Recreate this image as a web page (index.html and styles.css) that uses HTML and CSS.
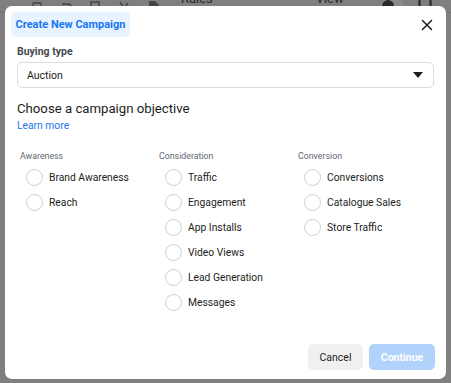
FILE: index.html
```html
<!DOCTYPE html>
<html lang="en">
<head>
  <meta charset="UTF-8">
  <title>Create New Campaign</title>
  <link rel="stylesheet" href="styles.css">
</head>
<body>
  <div class="backdrop">
    <div class="toolbar">
      <span class="tool"><svg width="12" height="12" viewBox="0 0 12 12"><rect x="2" y="3" width="8" height="8" rx="1" fill="none" stroke="#444" stroke-width="1.4"/></svg></span>
      <span class="tool"><svg width="14" height="12" viewBox="0 0 14 12"><path d="M3 4 H9 A3 3 0 0 1 9 10 H6" fill="none" stroke="#444" stroke-width="1.4"/></svg></span>
      <span class="tool"><svg width="12" height="12" viewBox="0 0 12 12"><rect x="2" y="2" width="8" height="9" fill="none" stroke="#444" stroke-width="1.4"/></svg></span>
      <span class="tool"><svg width="14" height="12" viewBox="0 0 14 12"><path d="M2 2 L6 8 L10 3" fill="none" stroke="#444" stroke-width="1.4"/></svg></span>
      <span class="tool"><svg width="14" height="12" viewBox="0 0 14 12"><path d="M2 1 H8 L12 5 V11 H2 Z" fill="#444"/></svg></span>
      <span class="rules">Rules &#9660;</span>
      <span class="view">View Setup</span>
      <span class="toggle"><span class="knob"></span></span>
      <span class="cols">&#10073;&#10073; Co</span>
    </div>
  </div>

  <div class="modal" role="dialog" aria-labelledby="modal-title">
    <div class="modal-head">
      <h1 id="modal-title" class="tab">Create New Campaign</h1>
      <button class="close" aria-label="Close">
        <svg width="12" height="12" viewBox="0 0 12 12"><path d="M1.5 1.5 L10.5 10.5 M10.5 1.5 L1.5 10.5" stroke="#1c1e21" stroke-width="1.5" stroke-linecap="round"/></svg>
      </button>
    </div>

    <div class="modal-body">
      <label class="field-label" for="buying">Buying type</label>
      <div class="select" id="buying">
        <span>Auction</span>
        <svg width="10" height="6" viewBox="0 0 10 6"><path d="M0 0 H10 L5 6 Z" fill="#1c1e21"/></svg>
      </div>

      <h2 class="objective">Choose a campaign objective</h2>
      <a href="#" class="learn">Learn more</a>

      <div class="groups">
        <div class="group">
          <div class="group-title">Awareness</div>
          <div class="option"><span class="radio"></span>Brand Awareness</div>
          <div class="option"><span class="radio"></span>Reach</div>
        </div>
        <div class="group">
          <div class="group-title">Consideration</div>
          <div class="option"><span class="radio"></span>Traffic</div>
          <div class="option"><span class="radio"></span>Engagement</div>
          <div class="option"><span class="radio"></span>App Installs</div>
          <div class="option"><span class="radio"></span>Video Views</div>
          <div class="option"><span class="radio"></span>Lead Generation</div>
          <div class="option"><span class="radio"></span>Messages</div>
        </div>
        <div class="group">
          <div class="group-title">Conversion</div>
          <div class="option"><span class="radio"></span>Conversions</div>
          <div class="option"><span class="radio"></span>Catalogue Sales</div>
          <div class="option"><span class="radio"></span>Store Traffic</div>
        </div>
      </div>
    </div>

    <div class="modal-foot">
      <button class="btn btn-cancel">Cancel</button>
      <button class="btn btn-continue" disabled>Continue</button>
    </div>
  </div>
</body>
</html>
```

FILE: styles.css
```css
body {
  margin: 0;
  width: 451px;
  height: 383px;
  overflow: hidden;
  background: #7f7f7f;
  font-family: Roboto, "Liberation Sans", Arial, sans-serif;
  color: #1c1e21;
  position: relative;
}

.backdrop {
  height: 383px;
}

.toolbar {
  display: flex;
  align-items: center;
  height: 18px;
  margin-top: -6px;
  padding-left: 22px;
  font-size: 13px;
  color: #2a2a2a;
  border-bottom: 1px solid #6f6f6f;
}

.tool {
  display: flex;
  width: 33px;
  justify-content: center;
  margin-top: 6px;
}

.rules {
  margin-left: 12px;
  margin-top: 6px;
}

.view {
  margin-left: 92px;
  margin-top: 6px;
}

.toggle {
  width: 26px;
  height: 14px;
  margin-left: 8px;
  margin-top: 6px;
  border-radius: 7px;
  background: #8a8a8a;
}

.knob {
  display: block;
  width: 12px;
  height: 12px;
  margin: 1px;
  border-radius: 50%;
  background: #2a2a2a;
}

.cols {
  margin-left: 10px;
  margin-top: 6px;
}

.modal {
  position: absolute;
  left: 5px;
  top: 6px;
  width: 441px;
  height: 373px;
  background: #fff;
  border-radius: 7px;
  display: flex;
  flex-direction: column;
}

.modal-head {
  display: flex;
  justify-content: space-between;
  align-items: center;
  padding: 6px 6px 0 6px;
}

.tab {
  margin: 0;
  height: 25px;
  width: 119px;
  box-sizing: border-box;
  display: flex;
  align-items: center;
  justify-content: center;
  white-space: nowrap;
  background: #e7f3ff;
  border-radius: 5px;
  color: #1877f2;
  font-size: 11px;
  font-weight: bold;
}

.close {
  border: none;
  background: none;
  padding: 0;
  width: 24px;
  height: 24px;
  display: flex;
  align-items: center;
  justify-content: center;
  margin-right: 1px;
}

.modal-body {
  padding: 0 12px;
  flex: 1;
}

.field-label {
  display: block;
  margin-top: 8px;
  font-size: 10.5px;
  font-weight: bold;
  color: #444950;
}

.select {
  margin-top: 4px;
  height: 26px;
  box-sizing: border-box;
  border: 1px solid #dadde1;
  border-radius: 5px;
  display: flex;
  align-items: center;
  justify-content: space-between;
  padding: 0 10px 0 9px;
  font-size: 10.5px;
}

.objective {
  margin: 12px 0 0 0;
  font-size: 13.2px;
  font-weight: normal;
  line-height: 17px;
}

.learn {
  display: block;
  margin-top: 2px;
  font-size: 10.3px;
  color: #1877f2;
  text-decoration: none;
}

.groups {
  display: grid;
  grid-template-columns: 139px 139px 1fr;
  margin-top: 19px;
  padding-left: 3px;
}

.group-title {
  font-size: 8.8px;
  color: #606770;
  line-height: 10px;
  margin-bottom: 4px;
}

.option {
  display: flex;
  align-items: center;
  gap: 6px;
  height: 25px;
  font-size: 10.3px;
  padding-left: 6px;
}

.radio {
  width: 17px;
  height: 17px;
  border: 1px solid #ccd0d5;
  border-radius: 50%;
  box-sizing: border-box;
}

.modal-foot {
  display: flex;
  justify-content: flex-end;
  gap: 6px;
  padding: 0 11px 9px 0;
}

.btn {
  height: 26px;
  border: none;
  border-radius: 5px;
  font-family: Roboto, "Liberation Sans", Arial, sans-serif;
  font-size: 10.5px;
  padding: 0;
}

.btn-cancel {
  width: 55px;
  background: #f0f0f0;
  color: #1c1e21;
}

.btn-continue {
  width: 66px;
  background: #b1d3fb;
  color: #fff;
  font-weight: bold;
}
```
